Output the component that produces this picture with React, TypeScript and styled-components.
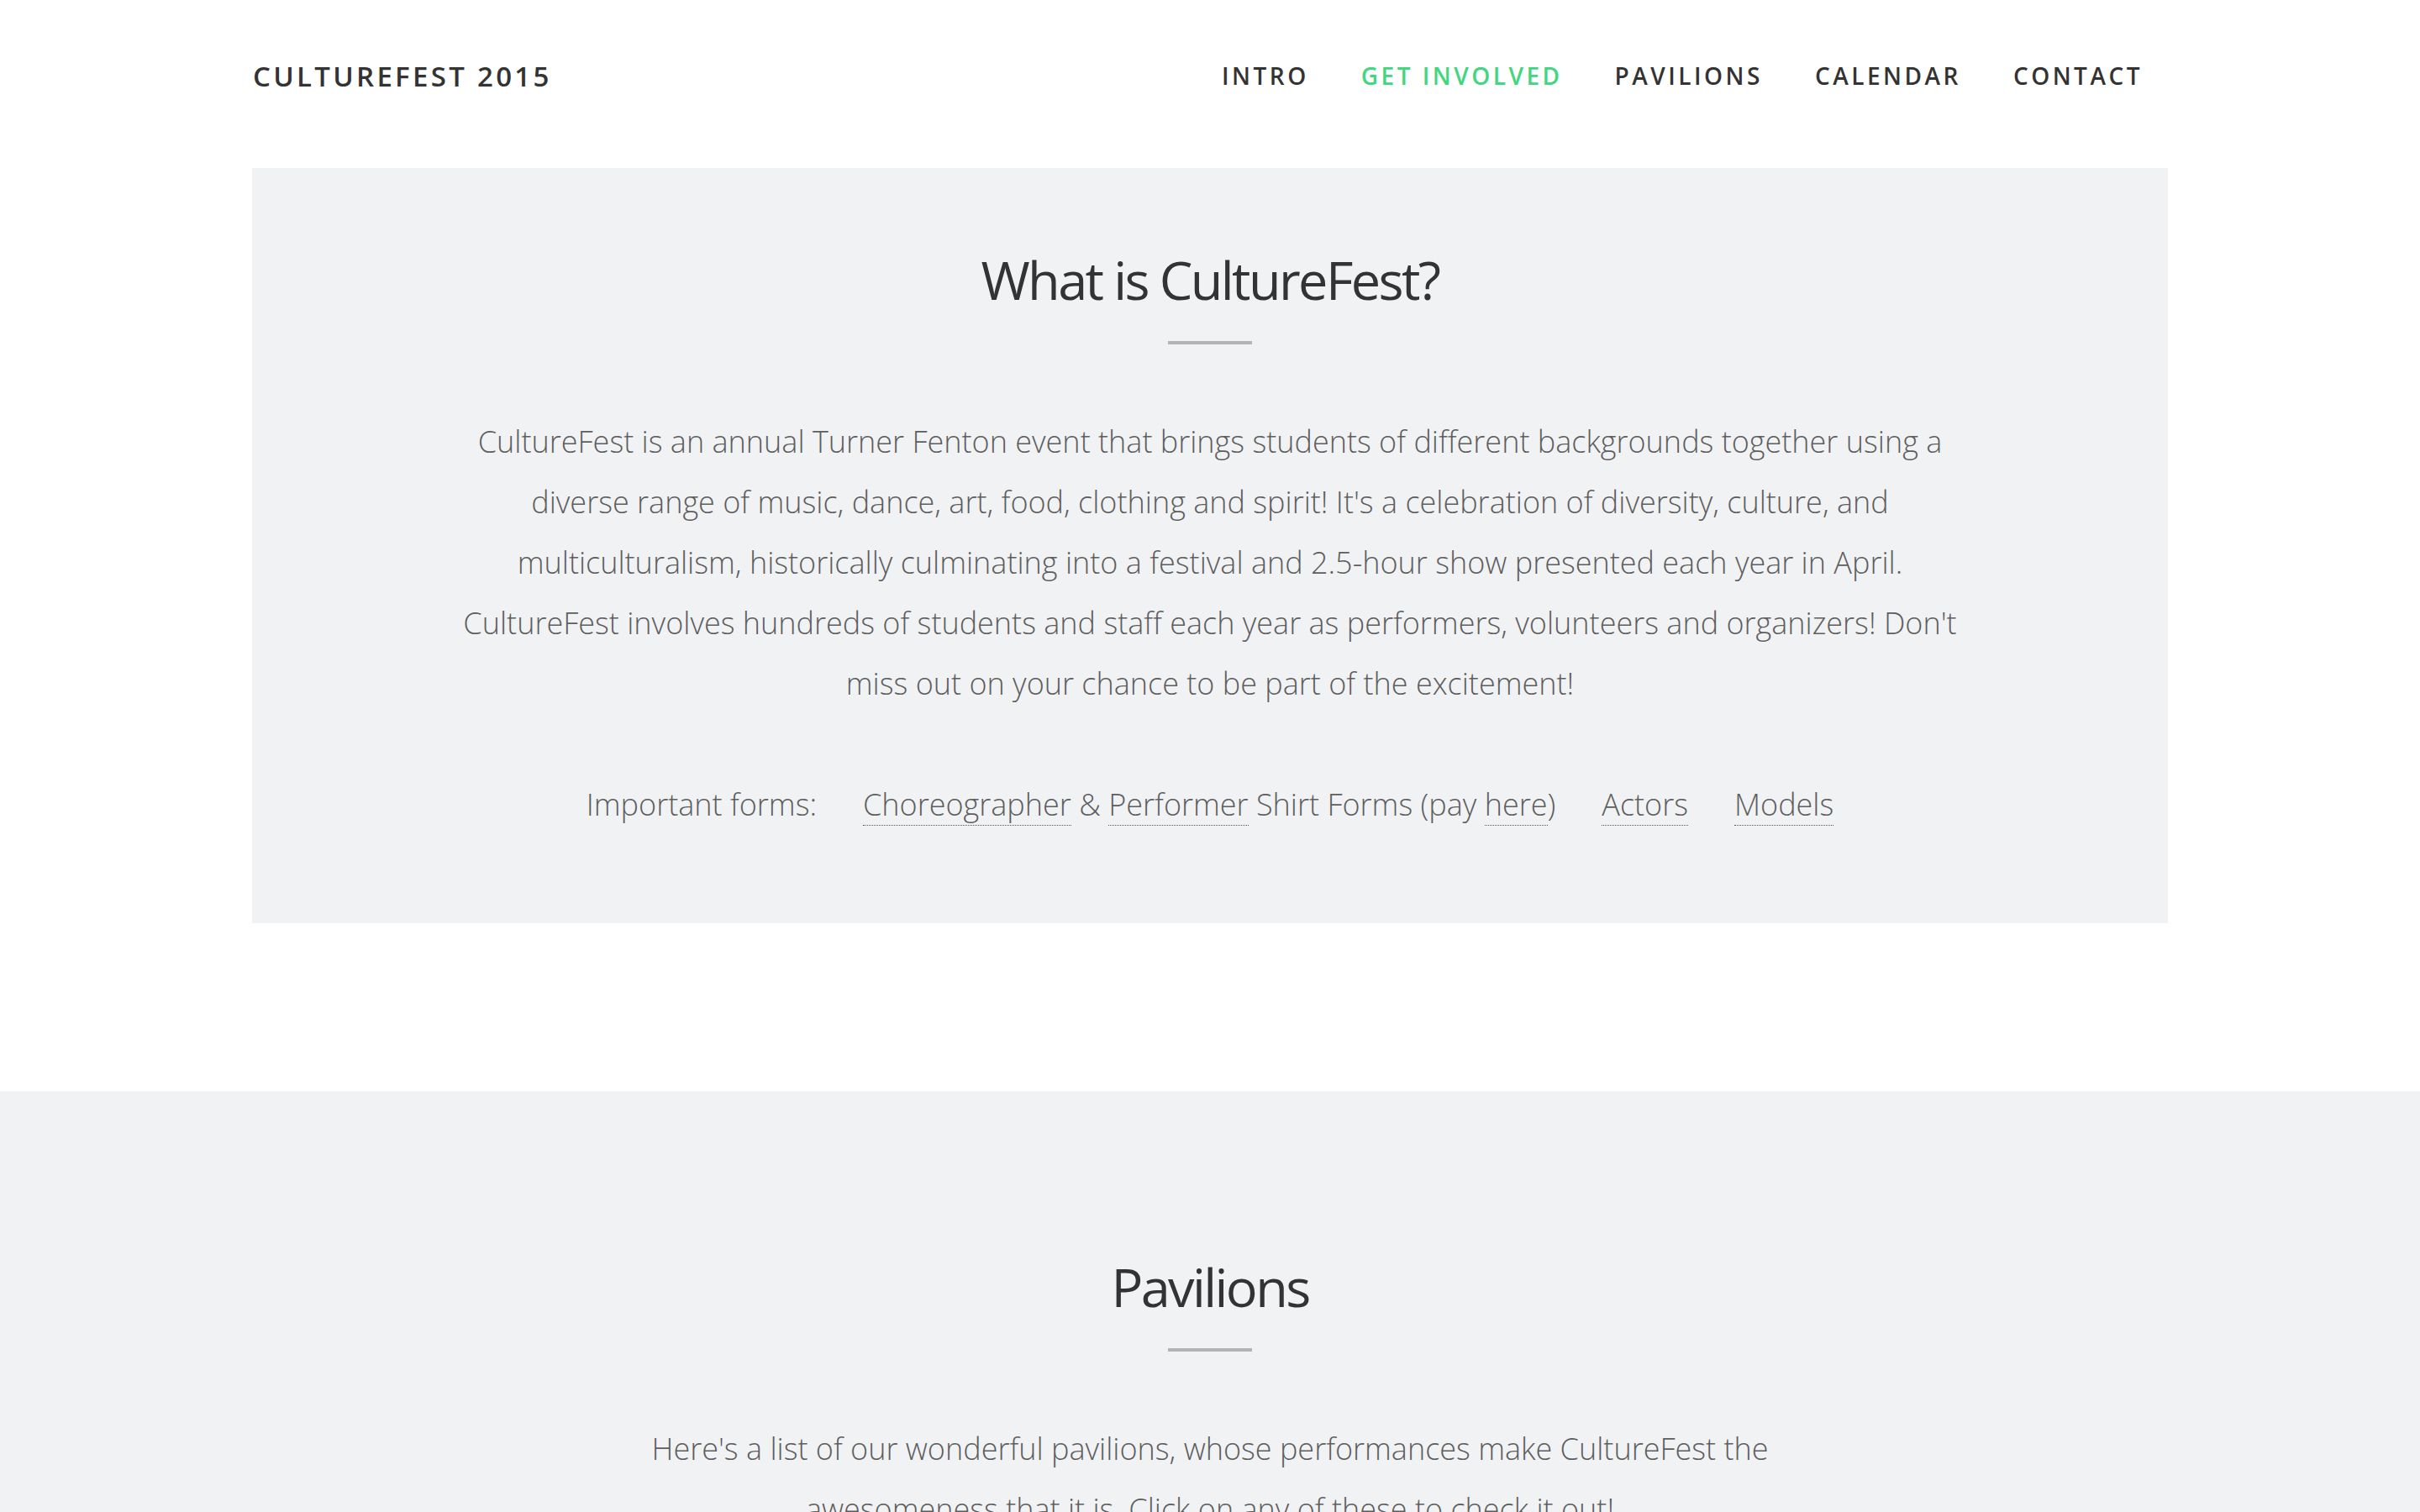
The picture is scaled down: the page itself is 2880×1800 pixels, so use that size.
import React from 'react'
import styled, { createGlobalStyle } from 'styled-components'

const GlobalStyle = createGlobalStyle`
  html,
  body {
    margin: 0;
    padding: 0;
    background: #fff;
    font-family: 'Open Sans', 'Noto Sans', sans-serif;
    color: #333;
  }
`

const Page = styled.div`
  width: 100%;
`

const Container = styled.div`
  width: 2280px;
  margin: 0 auto;
`

const Header = styled.header`
  height: 180px;
  display: flex;
  align-items: center;
  justify-content: space-between;
`

const Logo = styled.a`
  font-family: 'Open Sans', sans-serif;
  font-weight: 600;
  font-size: 33px;
  letter-spacing: 3.3px;
  color: #333;
  text-decoration: none;
  margin-left: 1px;
`

const Nav = styled.nav`
  display: flex;
  align-items: center;
`

const NavLink = styled.a<{ $active?: boolean }>`
  padding: 0 31px;
  font-family: 'Open Sans', sans-serif;
  font-weight: 600;
  font-size: 28px;
  letter-spacing: 3.5px;
  color: ${props => (props.$active ? '#41d67f' : '#333')};
  text-decoration: none;
  text-transform: uppercase;

  &:last-child {
    padding-right: 30px;
  }
`

const Intro = styled.section`
  margin-top: 20px;
  margin-bottom: 200px;
  padding: 94px 0 105px;
  background: #f1f2f4;
  text-align: center;
`

const Band = styled.section`
  background: #f1f2f4;
  padding: 194px 0 160px;
  text-align: center;
`

const Heading = styled.h2`
  margin: 0;
  font-family: 'Open Sans', sans-serif;
  font-weight: 400;
  font-size: 63px;
  line-height: 77px;
  letter-spacing: -2.6px;
  color: #333;
`

const Divider = styled.hr`
  width: 100px;
  height: 4px;
  margin: 35px auto 80px;
  border: none;
  background: #b3b3b3;
`

const Lead = styled.p<{ $width: number }>`
  max-width: ${props => props.$width}px;
  margin: 0 auto;
  font-family: 'Open Sans', sans-serif;
  font-weight: 300;
  font-size: 36px;
  line-height: 72px;
  color: #5e5e5e;
`

const Forms = styled.div`
  margin-top: 72px;
  display: flex;
  justify-content: center;
  gap: 55px;
  font-weight: 300;
  font-size: 36px;
  line-height: 72px;
  color: #5e5e5e;
`

const FormLink = styled.a`
  color: #5e5e5e;
  text-decoration: none;
  border-bottom: 1px dotted #555;
`

const Group = styled.span``

export default function App() {
  const nav = ['Intro', 'Get Involved', 'Pavilions', 'Calendar', 'Contact']

  return (
    <Page>
      <GlobalStyle />
      <Container>
        <Header>
          <Logo href="#">CULTUREFEST 2015</Logo>
          <Nav>
            {nav.map(item => (
              <NavLink key={item} href="#" $active={item === 'Get Involved'}>
                {item}
              </NavLink>
            ))}
          </Nav>
        </Header>

        <Intro>
          <Heading>What is CultureFest?</Heading>
          <Divider />
          <Lead $width={1800}>
            CultureFest is an annual Turner Fenton event that brings students of different
            backgrounds together using a diverse range of music, dance, art, food, clothing and
            spirit! It's a celebration of diversity, culture, and multiculturalism, historically
            culminating into a festival and 2.5-hour show presented each year in April.
            CultureFest involves hundreds of students and staff each year as performers,
            volunteers and organizers! Don't miss out on your chance to be part of the excitement!
          </Lead>
          <Forms>
            <Group>Important forms:</Group>
            <Group>
              <FormLink href="#">Choreographer</FormLink> &amp;{' '}
              <FormLink href="#">Performer</FormLink> Shirt Forms (pay{' '}
              <FormLink href="#">here</FormLink>)
            </Group>
            <Group>
              <FormLink href="#">Actors</FormLink>
            </Group>
            <Group>
              <FormLink href="#">Models</FormLink>
            </Group>
          </Forms>
        </Intro>
      </Container>

      <Band>
        <Heading>Pavilions</Heading>
        <Divider />
        <Lead $width={1400}>
          Here's a list of our wonderful pavilions, whose performances make CultureFest the
          awesomeness that it is. Click on any of these to check it out!
        </Lead>
      </Band>
    </Page>
  )
}
